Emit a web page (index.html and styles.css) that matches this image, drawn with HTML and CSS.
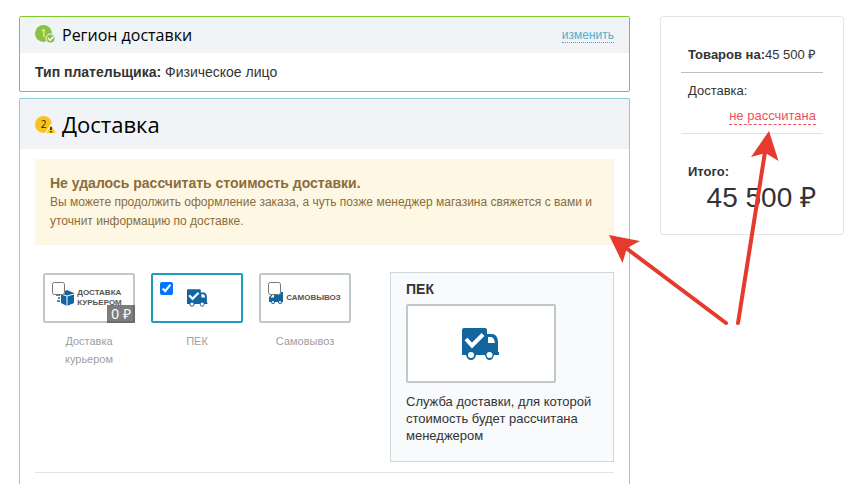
FILE: index.html
```html
<!DOCTYPE html>
<html lang="ru">
<head>
<meta charset="utf-8">
<title>Оформление заказа</title>
<link rel="stylesheet" href="styles.css">
</head>
<body>
<svg class="symbols" aria-hidden="true">
  <symbol id="truck" viewBox="0 0 38 32">
    <path fill="#12659f" d="M2 0H23Q25 0 25 2V6H30Q35 6 36 13V24H37V27H32Q31 32 27.500 32T23 27H14Q13 32 9 32T4 27H0V2Q0 0 2 0Z"/>
    <path fill="#fff" d="M26 9H29Q32 9 33 15H26Z"/>
    <circle cx="9" cy="27" r="3" fill="#fff"/><circle cx="27.500" cy="27" r="3" fill="#fff"/>
    <path fill="none" stroke="#fff" stroke-width="4" d="M4 11 10 17.500 21 6.500"/>
  </symbol>
</svg>
<div class="page">
  <main class="steps">
    <section class="step step-done">
      <header class="step-head">
        <svg class="step-icon" viewBox="0 0 22 20" aria-hidden="true">
          <circle cx="8.500" cy="8.500" r="8.500" fill="#88c440"/>
          <text class="icon-number" x="8.500" y="12" fill="#fff">1</text>
          <circle cx="15.500" cy="13.500" r="5" fill="#f0f4f7"/>
          <circle cx="15.500" cy="13.500" r="4" fill="#88c440"/>
          <path d="M13 13 15.200 15.200 18.500 11.500" fill="none" stroke="#fff" stroke-width="1.500"/>
        </svg>
        <h2 class="step-title">Регион доставки</h2>
        <a class="edit-link" href="#region">изменить</a>
      </header>
      <p class="payer"><strong>Тип плательщика:</strong> Физическое лицо</p>
    </section>

    <section class="step step-active">
      <header class="step-head">
        <svg class="step-icon" viewBox="0 -2 22 20" aria-hidden="true">
          <circle cx="8.500" cy="8.500" r="8.500" fill="#fac31c"/>
          <text class="icon-number" x="8.500" y="12" fill="#222">2</text>
          <path d="M16 7 22 18H9.500Z" fill="#f0f4f7"/>
          <path d="M16 9 20.500 17H11.500Z" fill="#fac31c"/>
          <path d="M15.200 11H16.800V14H15.200ZM15.200 15H16.800V16.500H15.200Z" fill="#222"/>
        </svg>
        <h2 class="step-title">Доставка</h2>
      </header>
      <div class="step-body">
        <div class="notice" role="alert">
          <strong class="notice-title">Не удалось рассчитать стоимость доставки.</strong>
          <p class="notice-text">Вы можете продолжить оформление заказа, а чуть позже менеджер магазина свяжется с вами и уточнит информацию по доставке.</p>
        </div>
        <div class="delivery">
          <div class="options">
            <label class="option">
              <span class="tile">
                <input class="check" type="checkbox">
                <svg class="logo-box" viewBox="0 0 18 16" aria-hidden="true">
                  <path fill="#12659f" d="M5 3 11 0 18 3V13L11 16 5 13Z"/>
                  <path fill="none" stroke="#fff" d="M5 4 11 6 18 4M11 6V16"/>
                  <path stroke="#12659f" stroke-width="1.500" d="M0 5H4M2 8H4M1 11H4"/>
                </svg>
                <span class="logo-text">ДОСТАВКА<br>КУРЬЕРОМ</span>
                <span class="price">0 ₽</span>
              </span>
              <span class="option-name">Доставка курьером</span>
            </label>
            <label class="option">
              <span class="tile tile-selected">
                <input class="check" type="checkbox" checked>
                <svg class="logo-truck" aria-hidden="true"><use href="#truck"/></svg>
              </span>
              <span class="option-name">ПЕК</span>
            </label>
            <label class="option">
              <span class="tile">
                <input class="check" type="checkbox">
                <svg class="logo-van" viewBox="0 0 14 12" aria-hidden="true">
                  <path fill="#12659f" d="M14 0H6V2H3L0 5V10H2Q2 12 4 12T6 10H9Q9 12 11 12T13 10H14Z"/>
                  <path fill="#fff" d="M3.500 3H5V5.500H1.500Z"/>
                  <circle cx="4" cy="10" r="1" fill="#fff"/><circle cx="11" cy="10" r="1" fill="#fff"/>
                </svg>
                <span class="logo-text">САМОВЫВОЗ</span>
              </span>
              <span class="option-name">Самовывоз</span>
            </label>
          </div>
          <article class="details">
            <h3 class="details-title">ПЕК</h3>
            <div class="details-picture"><svg class="details-truck" aria-hidden="true"><use href="#truck"/></svg></div>
            <p class="details-text">Служба доставки, для которой стоимость будет рассчитана менеджером</p>
          </article>
        </div>
        <hr class="divider">
      </div>
    </section>
  </main>

  <aside class="summary">
    <div class="row row-goods"><strong>Товаров на:</strong><span>45 500 ₽</span></div>
    <div class="row row-delivery"><span>Доставка:</span><a class="not-counted" href="#delivery">не рассчитана</a></div>
    <div class="row row-total"><strong>Итого:</strong><span class="total">45 500 ₽</span></div>
  </aside>
</div>
<svg class="arrows" viewBox="0 0 860 484" aria-hidden="true">
  <path class="shaft" d="M726 323 626 248M738 323 765 152"/>
  <path class="head" d="M609 235 640 241 627 248 622.500 263ZM769 131 778.500 161 765.500 153 751 157Z"/>
</svg>
</body>
</html>
```
FILE: styles.css
```css
* { box-sizing: border-box; }

body {
  margin: 0;
  background: #fff;
  color: #333;
  font: 12px/18px "Liberation Sans", Arial, sans-serif;
}

h2, h3, p { margin: 0; }

.symbols { position: absolute; width: 0; height: 0; }

.page {
  display: flex;
  align-items: flex-start;
  gap: 30px;
  min-height: 100vh;
  padding: 16px 16px 0 19px;
}

.steps {
  display: flex;
  flex: 1;
  flex-direction: column;
  align-self: stretch;
  gap: 6px;
}

.step { border: 1px solid; border-radius: 2px; }
.step-done { border-color: #81c926; }
.step-active {
  flex: 1;
  border-color: #8ccbd8;
  border-bottom: 0;
  border-radius: 2px 2px 0 0;
}

.step-head {
  display: flex;
  align-items: center;
  height: 36px;
  padding: 0 15px;
  background: #f0f4f7;
}
.step-active .step-head { height: 50px; }

.step-icon { width: 22px; height: 20px; margin-right: 5px; }
.icon-number { font: 10px "Open Sans", sans-serif; text-anchor: middle; }

.step-title {
  flex: 1;
  color: #000;
  font: 16px/22px "Open Sans", sans-serif;
}
.step-active .step-title { font-size: 22px; line-height: 32px; }

.edit-link {
  border-bottom: 1px dotted #3fa9c9;
  color: #4fafcb;
  line-height: 14px;
  text-decoration: none;
}

.payer { padding: 10px 15px; font-size: 14px; }

.step-body { padding: 10px 15px; }

.notice {
  padding: 14px 15px;
  background: #fef7e3;
  color: #8a6d3b;
}
.notice-title { display: block; font-size: 14px; line-height: 20px; }
.notice-text { line-height: 19px; }

.delivery {
  display: flex;
  align-items: flex-start;
  justify-content: space-between;
  margin-top: 27px;
}

.options { display: flex; gap: 16px; padding: 1px 0 0 8px; }
.option { width: 92px; }

.tile {
  position: relative;
  display: flex;
  align-items: center;
  justify-content: center;
  gap: 3px;
  height: 50px;
  border: 2px solid #c0c8cc;
  border-radius: 2px;
}
.tile-selected { border-color: #17a0b8; }

.check {
  position: absolute;
  top: 7px;
  left: 7px;
  width: 13px;
  height: 13px;
  margin: 0;
}

.logo-box { width: 18px; height: 16px; }
.logo-truck { width: 21px; height: 18px; }
.logo-van { width: 14px; height: 12px; }
.logo-text { color: #555; font-size: 8px; font-weight: bold; line-height: 10px; }

.price {
  position: absolute;
  right: -2px;
  bottom: -2px;
  padding: 0 4px;
  background: rgba(70, 70, 70, 0.7);
  color: #fff;
  font-size: 14px;
}

.option-name {
  display: block;
  padding: 9px 16px 0;
  color: #a0a0a0;
  font-size: 11px;
  text-align: center;
}

.details {
  width: 224px;
  padding: 7px 15px 17px;
  border: 1px solid #d0d7db;
  background: #f8fafc;
}
.details-title { font-size: 14px; line-height: 18px; }
.details-picture {
  display: flex;
  align-items: center;
  justify-content: center;
  width: 150px;
  height: 79px;
  margin: 6px 0 10px;
  border: 2px solid #c0c8cc;
  border-radius: 2px;
  background: #fff;
}
.details-truck { width: 38px; height: 32px; }
.details-text { font-size: 13px; line-height: 17px; }

.divider { margin: 10px 0 0; border: 0; border-top: 1px solid #e0e4e6; }

.summary {
  width: 184px;
  padding: 20px;
  border: 1px solid #e5e5e5;
  border-radius: 3px;
  font-size: 13px;
  line-height: 19px;
}
.row { display: flex; padding: 8px 7px; white-space: nowrap; }
.row-goods {
  justify-content: space-between;
  border-bottom: 1px solid #bbbfc1;
}
.row-delivery {
  flex-direction: column;
  gap: 8px;
  border-bottom: 1px solid #e0e3e5;
}
.not-counted {
  align-self: flex-end;
  border-bottom: 1px dashed #f0505a;
  color: #f0505a;
  line-height: 16px;
  text-decoration: none;
}
.row-total { flex-direction: column; padding-top: 28px; padding-bottom: 0; }
.total { align-self: flex-end; font-size: 28px; line-height: 33px; }

.arrows {
  position: absolute;
  top: 0;
  left: 0;
  width: 860px;
  height: 484px;
  pointer-events: none;
}
.shaft { fill: none; stroke: #e63a2e; stroke-width: 4; stroke-linecap: round; }
.head { fill: #e63a2e; }
```
